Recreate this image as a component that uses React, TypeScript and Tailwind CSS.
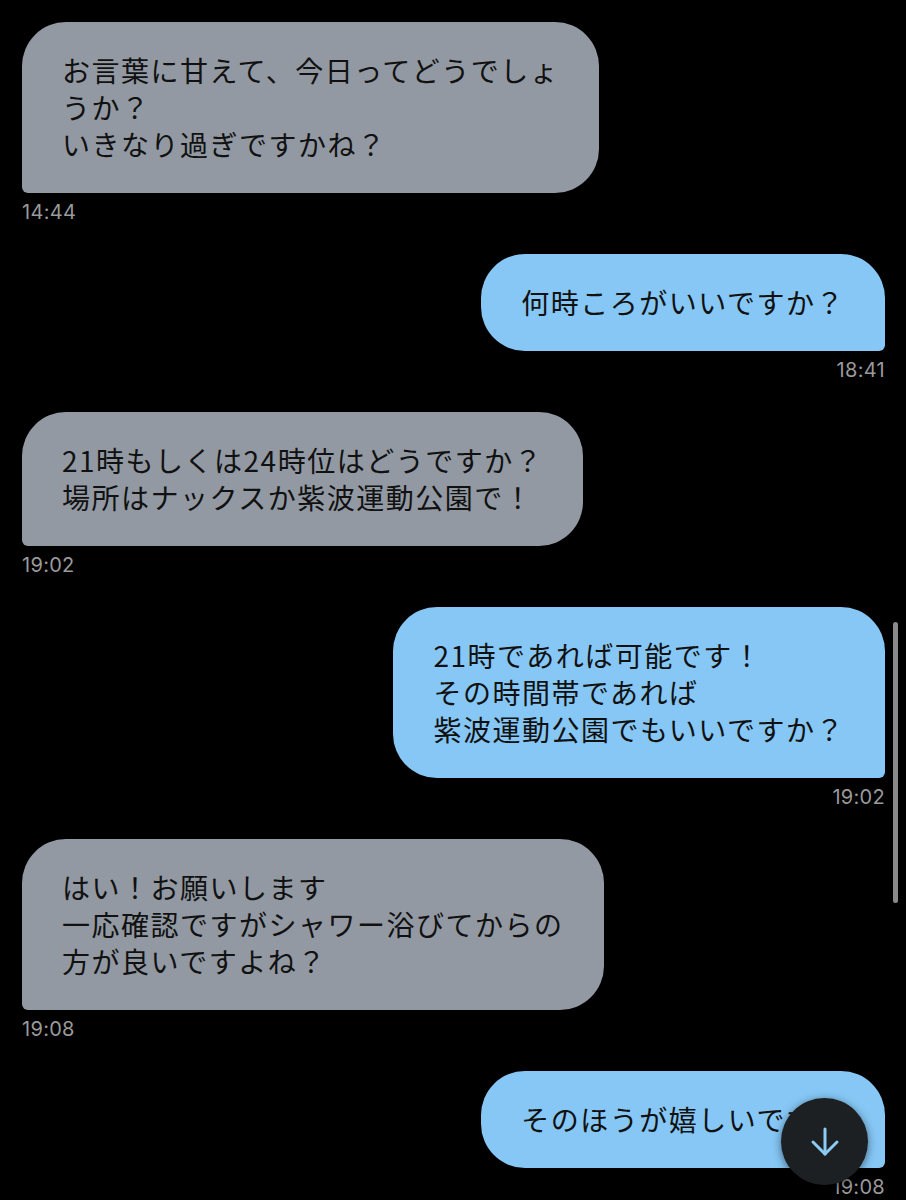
import React from 'react';

type Message = {
  id: number;
  mine: boolean;
  lines: string[];
  time: string;
};

const messages: Message[] = [
  { id: 1, mine: false, lines: ['お言葉に甘えて、今日ってどうでしょ', 'うか？', 'いきなり過ぎですかね？'], time: '14:44' },
  { id: 2, mine: true, lines: ['何時ころがいいですか？'], time: '18:41' },
  { id: 3, mine: false, lines: ['21時もしくは24時位はどうですか？', '場所はナックスか紫波運動公園で！'], time: '19:02' },
  { id: 4, mine: true, lines: ['21時であれば可能です！', 'その時間帯であれば', '紫波運動公園でもいいですか？'], time: '19:02' },
  { id: 5, mine: false, lines: ['はい！お願いします', '一応確認ですがシャワー浴びてからの', '方が良いですよね？'], time: '19:08' },
  { id: 6, mine: true, lines: ['そのほうが嬉しいです！'], time: '19:08' },
];

const Bubble = ({ msg }: { msg: Message }) => (
  <div className={msg.mine ? 'flex flex-col items-end' : 'flex flex-col items-start'}>
    <div
      className={
        msg.mine
          ? 'max-w-[600px] rounded-[44px] rounded-br-[6px] bg-[#86c7f5] px-10 py-[30px]'
          : 'max-w-[600px] rounded-[44px] rounded-bl-[6px] bg-[#9299a2] px-10 py-[30px]'
      }
    >
      {msg.lines.map((line, i) => (
        <div key={i} className="whitespace-nowrap text-[28px] leading-[37px] tracking-[1.5px] text-[#111111]">
          {line}
        </div>
      ))}
    </div>
    <div className="mt-2 font-['Inter',sans-serif] text-[20px] leading-[22px] tracking-[0.3px] text-[#9a9a9a]">
      {msg.time}
    </div>
  </div>
);

export default function App() {
  return (
    <div className="relative h-[1200px] w-[906px] overflow-hidden bg-black font-['Noto_Sans_CJK_JP','Noto_Sans',sans-serif]">
      <div className="flex flex-col gap-[31px] pl-[22px] pr-[21px] pt-[22px]">
        {messages.map(m => (
          <Bubble key={m.id} msg={m} />
        ))}
      </div>

      {/* scrollbar */}
      <div className="absolute left-[893px] top-[622px] h-[281px] w-[5px] rounded-full bg-[#8a8a8a]" />

      {/* jump to latest */}
      <button className="absolute left-[781px] top-[1098px] flex h-[87px] w-[87px] items-center justify-center rounded-full bg-[#1d2023] shadow-[0_2px_8px_rgba(0,0,0,0.5)]">
        <svg width="34" height="34" viewBox="0 0 34 34" fill="none" stroke="#8ccbf2" strokeWidth="3" strokeLinecap="round" strokeLinejoin="round">
          <path d="M17 4v25" />
          <path d="M5 17l12 12 12-12" />
        </svg>
      </button>
    </div>
  );
}
